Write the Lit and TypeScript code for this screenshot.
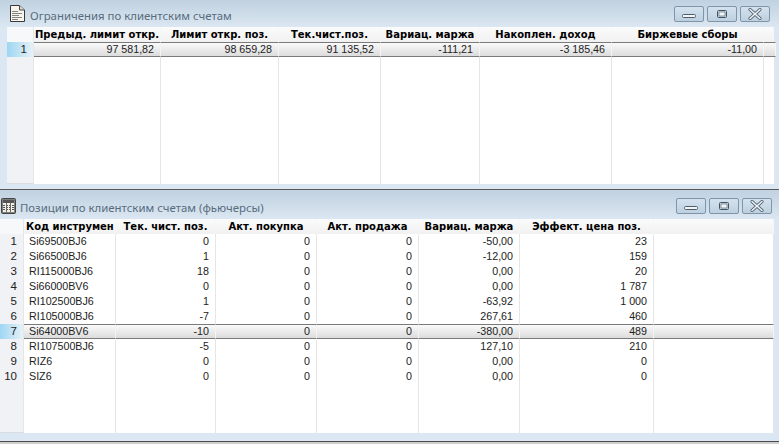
import { LitElement, html, css, svg } from "lit";
import { customElement, property } from "lit/decorators.js";

const docIcon = svg`<svg class="ico" width="15" height="17" viewBox="0 0 15 17"><path d="M.5 .5H9.5L14.5 5V16.5H.5Z" fill="#f7f5ee" stroke="#3a3a3a"/><path d="M9.5 .5V5H14.5" fill="#d8d8d0" stroke="#4a4a4a"/><path d="M2 6.5H8M2 8.5H12M2 10.5H9M2 12.5H12M2 14.5H8" stroke="#858585" fill="none"/></svg>`;
const gridIcon = svg`<svg class="ico" width="15" height="16" viewBox="0 0 15 16"><rect x=".5" y=".5" width="14" height="15" rx="1" fill="#7c7f7c" stroke="#444"/><rect x="2" y="2" width="11" height="12" fill="#f2f0e4"/><rect x="2" y="2" width="11" height="3" fill="#555"/><path d="M2 7.5H13M2 9.5H13M2 11.5H13" stroke="#555" stroke-dasharray="2 1" fill="none"/><path d="M5.5 5V14M9.5 5V14" stroke="#6a6a6a" fill="none"/></svg>`;

@customElement("win-buttons")
class WinButtons extends LitElement {
  static styles = css`
    :host { display: flex; gap: 3px; }
    .b { width: 30px; height: 16px; box-sizing: border-box; border: 1px solid #7f96aa; border-radius: 2px;
      background: linear-gradient(#d4e2ee, #bdd0e0); display: flex; align-items: center; justify-content: center; }
    svg { display: block; }
  `;
  render() {
    return html`
      <div class="b"><svg width="16" height="10" viewBox="0 0 16 10"><rect x="1.5" y="5.5" width="13" height="3" rx="1" fill="#f1f5f8" stroke="#4d5c69"/></svg></div>
      <div class="b"><svg width="12" height="10" viewBox="0 0 12 10"><rect x="1.5" y="1.5" width="9" height="7" rx="1" fill="none" stroke="#44525e"/><rect x="3" y="3" width="6" height="4" fill="#f1f5f8" stroke="#4d5c69" stroke-width=".6"/></svg></div>
      <div class="b"><svg width="16" height="12" viewBox="0 0 16 12"><path d="M3 1.5L13 10.5M13 1.5L3 10.5" stroke="#5a6a78" stroke-width="3.2" stroke-linecap="round" fill="none"/><path d="M3 1.5L13 10.5M13 1.5L3 10.5" stroke="#f3f6f9" stroke-width="1.4" stroke-linecap="round" fill="none"/></svg></div>
    `;
  }
}

@customElement("data-grid")
class DataGrid extends LitElement {
  @property({ type: Array }) widths: number[] = [];
  @property({ type: Array }) headers: string[] = [];
  @property({ type: Array }) rows: string[][] = [];
  @property({ type: Number }) selected = -1;
  @property({ type: Number }) leftAlign = 0;

  static styles = css`
    :host { display: flex; flex-direction: column; flex: 1; background: #fff; min-height: 0; }
    .row { display: grid; flex: none; height: 15px; }
    .hd { background: linear-gradient(#fbfbfb, #f1f1f1); }
    .c { box-sizing: border-box; border-right: 1px solid #e6e6e6; font: 10.7px/15px "Liberation Sans", sans-serif; color: #222;
      padding: 0 6px 0 5px; text-align: right; white-space: nowrap; overflow: hidden; }
    .c.l { text-align: left; }
    .hd .c { font: bold 10px/15px "DejaVu Sans", sans-serif; color: #000; text-align: center; padding: 0;
      border-right-color: #f6f6f6; }
    .hd .c.l { text-align: left; padding-left: 2px; }
    .c.n { background: #f0f2f5; border-right: 1px solid #e4e6e8; padding: 0 6px 0 0; font-size: 11.5px; }
    .hd .c.n { background: #f7f8fa; }
    .sel .c:not(.n) { background: linear-gradient(#fafafa, #dcdcdc); border-top: 1px solid #7a7a7a; border-bottom: 1px solid #7a7a7a;
      border-right-color: #f4f4f4; line-height: 13px; }
    .sel .c.n { background: linear-gradient(to right, #9ed6f2, #e6f1f7); }
    .fill { flex: 1; height: auto; min-height: 0; }
    .fill .c.n { border-bottom: 1px solid #d8dde2; }
  `;

  render() {
    const tpl = `grid-template-columns:${this.widths.map((w) => w + "px").join(" ")}`;
    return html`
      <div class="row hd" style=${tpl}>
        <div class="c n"></div>
        ${this.widths.slice(1).map((_, i) => html`<div class="c ${i < this.leftAlign ? "l" : ""}">${this.headers[i] ?? ""}</div>`)}
      </div>
      ${this.rows.map(
        (r, ri) => html`<div class="row ${ri === this.selected ? "sel" : ""}" style=${tpl}>
          <div class="c n">${ri + 1}</div>
          ${this.widths.slice(1).map((_, i) => html`<div class="c ${i < this.leftAlign ? "l" : ""}">${r[i] ?? ""}</div>`)}
        </div>`
      )}
      <div class="row fill" style=${tpl}>
        <div class="c n"></div>
        ${this.widths.slice(1).map(() => html`<div class="c"></div>`)}
      </div>
    `;
  }
}

@customElement("app-root")
class AppRoot extends LitElement {
  static styles = css`
    :host { display: block; width: 779px; height: 444px; overflow: hidden; background: #cfcfcf; }
    .win { display: flex; flex-direction: column; background: #dbe7f2; box-sizing: border-box; }
    .top { height: 189px; padding: 0 5px 5px 7px; }
    .bottom { height: 253px; padding: 0 5px 8px 0; border-top: 1px solid #5a5a5a; border-bottom: 1px solid #4c4c4c; }
    .title { flex: none; display: flex; align-items: center; font: 11.4px "Noto Sans", sans-serif; color: #566c7e;
      background: linear-gradient(#c0d1e0, #dbe7f2); box-sizing: border-box; }
    .top .title { height: 27px; margin: 0 -5px 0 -7px; padding: 0 9px 0 10px; }
    .bottom .title { height: 29px; margin: 0 -5px 0 0; padding: 2px 7px 0 1px; }
    .text { flex: 1; white-space: nowrap; padding-top: 3px; }
    .ico { display: block; flex: none; margin-right: 5px; }
    .bottom .ico { margin-right: 4px; }
  `;

  render() {
    const top = [["97 581,82", "98 659,28", "91 135,52", "-111,21", "-3 185,46", "-11,00"]];
    const bottom = [
      ["Si69500BJ6", "0", "0", "0", "-50,00", "23"],
      ["Si66500BJ6", "1", "0", "0", "-12,00", "159"],
      ["RI115000BJ6", "18", "0", "0", "0,00", "20"],
      ["Si66000BV6", "0", "0", "0", "0,00", "1 787"],
      ["RI102500BJ6", "1", "0", "0", "-63,92", "1 000"],
      ["RI105000BJ6", "-7", "0", "0", "267,61", "460"],
      ["Si64000BV6", "-10", "0", "0", "-380,00", "489"],
      ["RI107500BJ6", "-5", "0", "0", "127,10", "210"],
      ["RIZ6", "0", "0", "0", "0,00", "0"],
      ["SIZ6", "0", "0", "0", "0,00", "0"],
    ];
    return html`
      <div class="win top">
        <div class="title">${docIcon}<span class="text">Ограничения по клиентским счетам</span><win-buttons></win-buttons></div>
        <data-grid
          .widths=${[27, 127, 118, 102, 99, 132, 152, 10]}
          .headers=${["Предыд. лимит откр.", "Лимит откр. поз.", "Тек.чист.поз.", "Вариац. маржа", "Накоплен. доход", "Биржевые сборы"]}
          .rows=${top}
          .selected=${0}
        ></data-grid>
      </div>
      <div class="win bottom">
        <div class="title">${gridIcon}<span class="text">Позиции по клиентским счетам (фьючерсы)</span><win-buttons></win-buttons></div>
        <data-grid
          .widths=${[24, 92, 100, 101, 102, 101, 134, 120]}
          .headers=${["Код инструмен", "Тек. чист. поз.", "Акт. покупка", "Акт. продажа", "Вариац. маржа", "Эффект. цена поз."]}
          .rows=${bottom}
          .selected=${6}
          .leftAlign=${1}
        ></data-grid>
      </div>
    `;
  }
}
